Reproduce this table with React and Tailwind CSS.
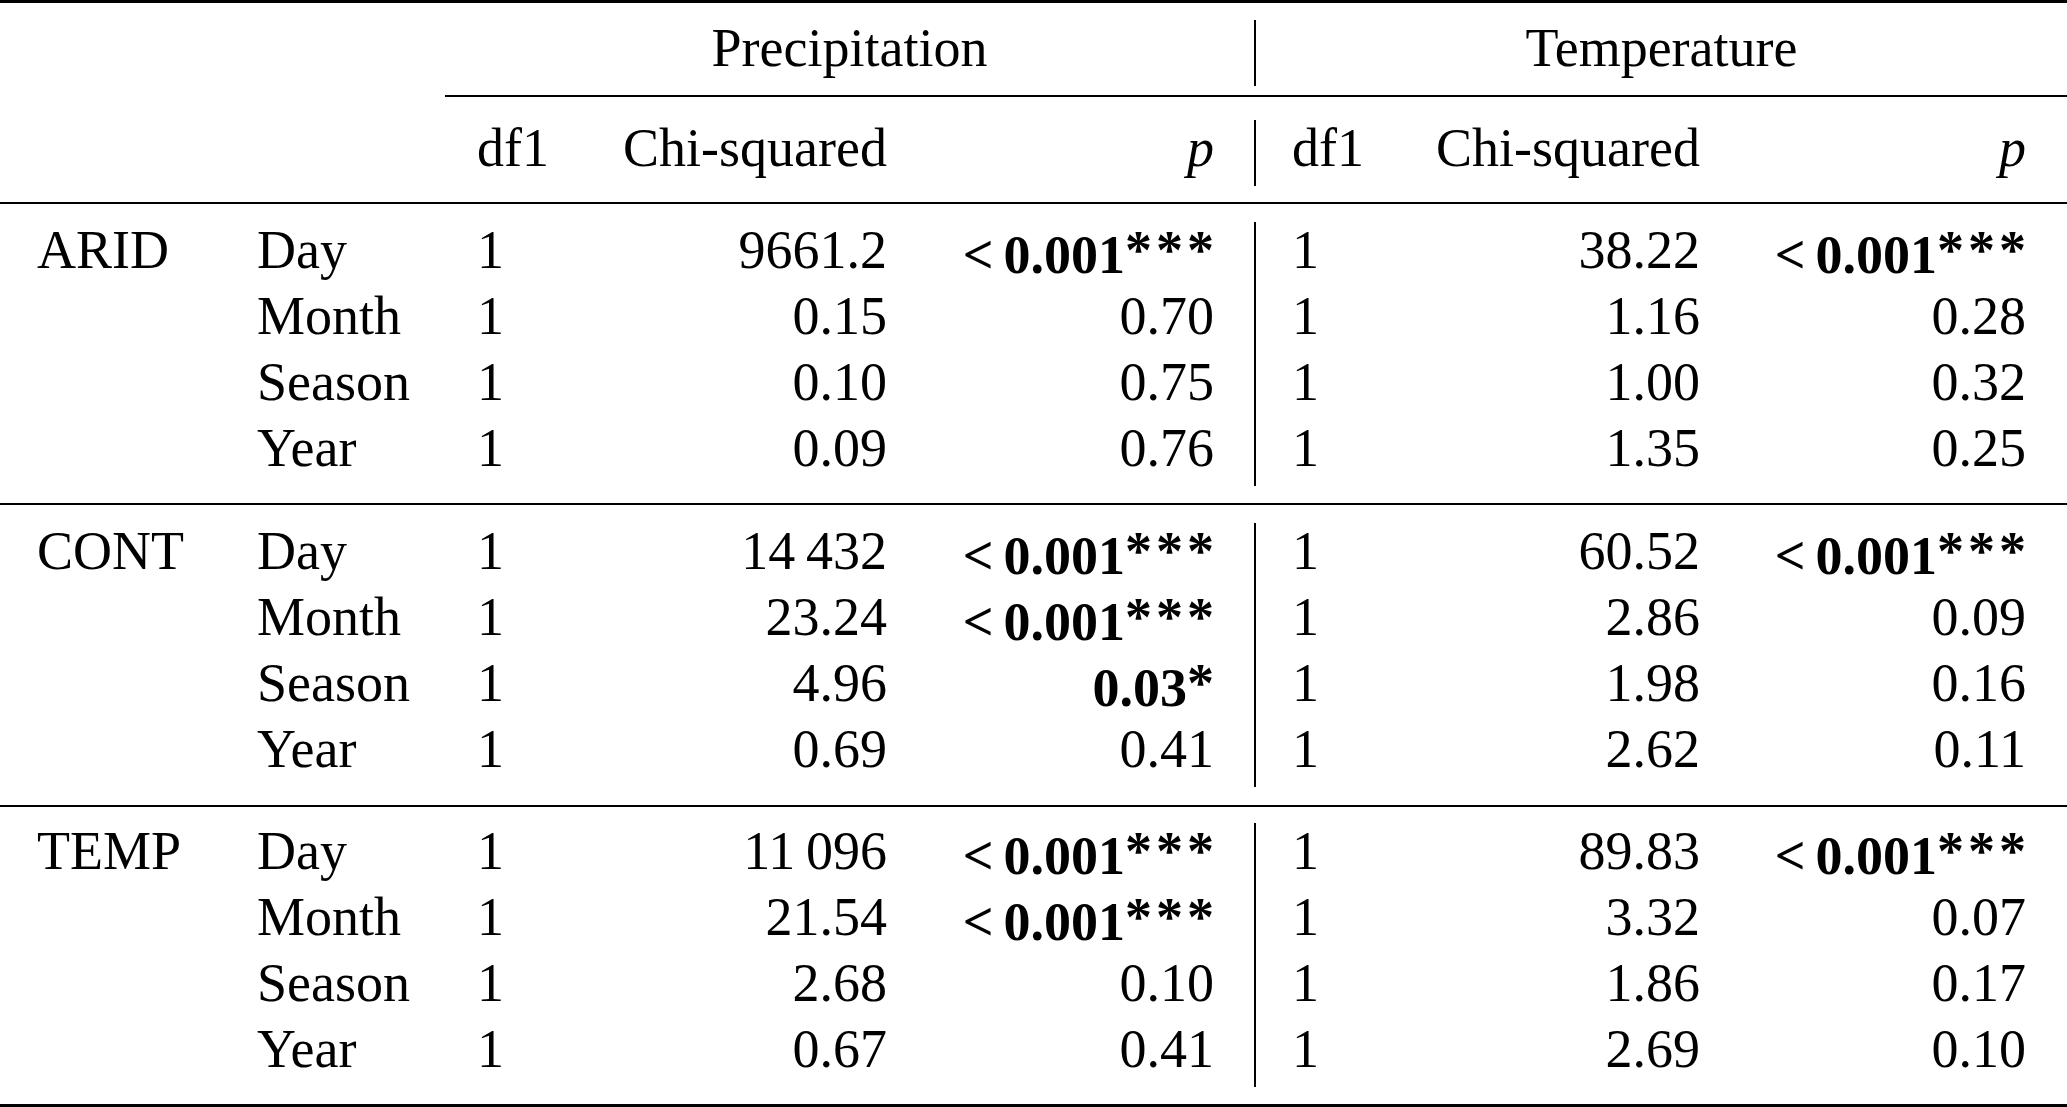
const groups = [
  {
    name: 'ARID',
    rows: [
      ['Day', '9661.2', { lt: true, v: '0.001', stars: 3 }, '38.22', { lt: true, v: '0.001', stars: 3 }],
      ['Month', '0.15', '0.70', '1.16', '0.28'],
      ['Season', '0.10', '0.75', '1.00', '0.32'],
      ['Year', '0.09', '0.76', '1.35', '0.25'],
    ],
  },
  {
    name: 'CONT',
    rows: [
      ['Day', '14\u2009432', { lt: true, v: '0.001', stars: 3 }, '60.52', { lt: true, v: '0.001', stars: 3 }],
      ['Month', '23.24', { lt: true, v: '0.001', stars: 3 }, '2.86', '0.09'],
      ['Season', '4.96', { v: '0.03', stars: 1 }, '1.98', '0.16'],
      ['Year', '0.69', '0.41', '2.62', '0.11'],
    ],
  },
  {
    name: 'TEMP',
    rows: [
      ['Day', '11\u2009096', { lt: true, v: '0.001', stars: 3 }, '89.83', { lt: true, v: '0.001', stars: 3 }],
      ['Month', '21.54', { lt: true, v: '0.001', stars: 3 }, '3.32', '0.07'],
      ['Season', '2.68', '0.10', '1.86', '0.17'],
      ['Year', '0.67', '0.41', '2.69', '0.10'],
    ],
  },
];

function PValue({ p }) {
  if (typeof p === 'string') return <span>{p}</span>;
  return (
    <span className="font-bold whitespace-nowrap">
      {p.lt && <span className="mr-[10px]">&lt;</span>}
      <span>{p.v}</span>
      <span className="align-[5px]">
        {Array.from({ length: p.stars }).map((_, i) => (
          <span key={i} className={i > 0 ? 'ml-[4px]' : ''}>*</span>
        ))}
      </span>
    </span>
  );
}

function PrecipCells({ df, chi, p }) {
  return (
    <div className="w-[809px] flex pl-[32px] pr-[40px]">
      <div className="w-[83px]">{df}</div>
      <div className="w-[327px] text-right">{chi}</div>
      <div className="w-[327px] text-right">{p}</div>
    </div>
  );
}

function TempCells({ df, chi, p }) {
  return (
    <div className="w-[813px] flex border-l-2 border-black pl-[36px] pr-[41px]">
      <div className="w-[83px]">{df}</div>
      <div className="w-[325px] text-right">{chi}</div>
      <div className="w-[326px] text-right">{p}</div>
    </div>
  );
}

function Group({ group, className }) {
  return (
    <div className={className}>
      {group.rows.map((r, i) => (
        <div key={r[0]} className="flex h-[66px] leading-[57px]">
          <div className="w-[257px] pl-[37px]">{i === 0 ? group.name : ''}</div>
          <div className="w-[188px]">{r[0]}</div>
          <PrecipCells df="1" chi={r[1]} p={<PValue p={r[2]} />} />
          <TempCells df="1" chi={r[3]} p={<PValue p={r[4]} />} />
        </div>
      ))}
    </div>
  );
}

export default function App() {
  return (
    <div className="w-[2067px] h-[1107px] bg-white text-black font-['Liberation_Serif','Times_New_Roman',serif] text-[54px] overflow-hidden">
      <div className="h-[3px] bg-black" />

      <div className="flex h-[66px] leading-[57px] mt-[17px]">
        <div className="w-[445px]" />
        <div className="w-[809px] text-center">Precipitation</div>
        <div className="w-[813px] border-l-2 border-black text-center">Temperature</div>
      </div>

      <div className="mt-[9px] ml-[445px] h-[2px] bg-black" />

      <div className="flex h-[66px] leading-[57px] mt-[23px]">
        <div className="w-[445px]" />
        <PrecipCells df="df1" chi="Chi-squared" p={<i>p</i>} />
        <TempCells df="df1" chi="Chi-squared" p={<i>p</i>} />
      </div>

      <div className="mt-[16px] h-[2px] bg-black" />
      <Group group={groups[0]} className="pt-[18px] pb-[17px]" />
      <div className="h-[2px] bg-black" />
      <Group group={groups[1]} className="pt-[18px] pb-[18px]" />
      <div className="h-[2px] bg-black" />
      <Group group={groups[2]} className="pt-[16px] pb-[17px]" />
      <div className="h-[3px] bg-black" />
    </div>
  );
}
